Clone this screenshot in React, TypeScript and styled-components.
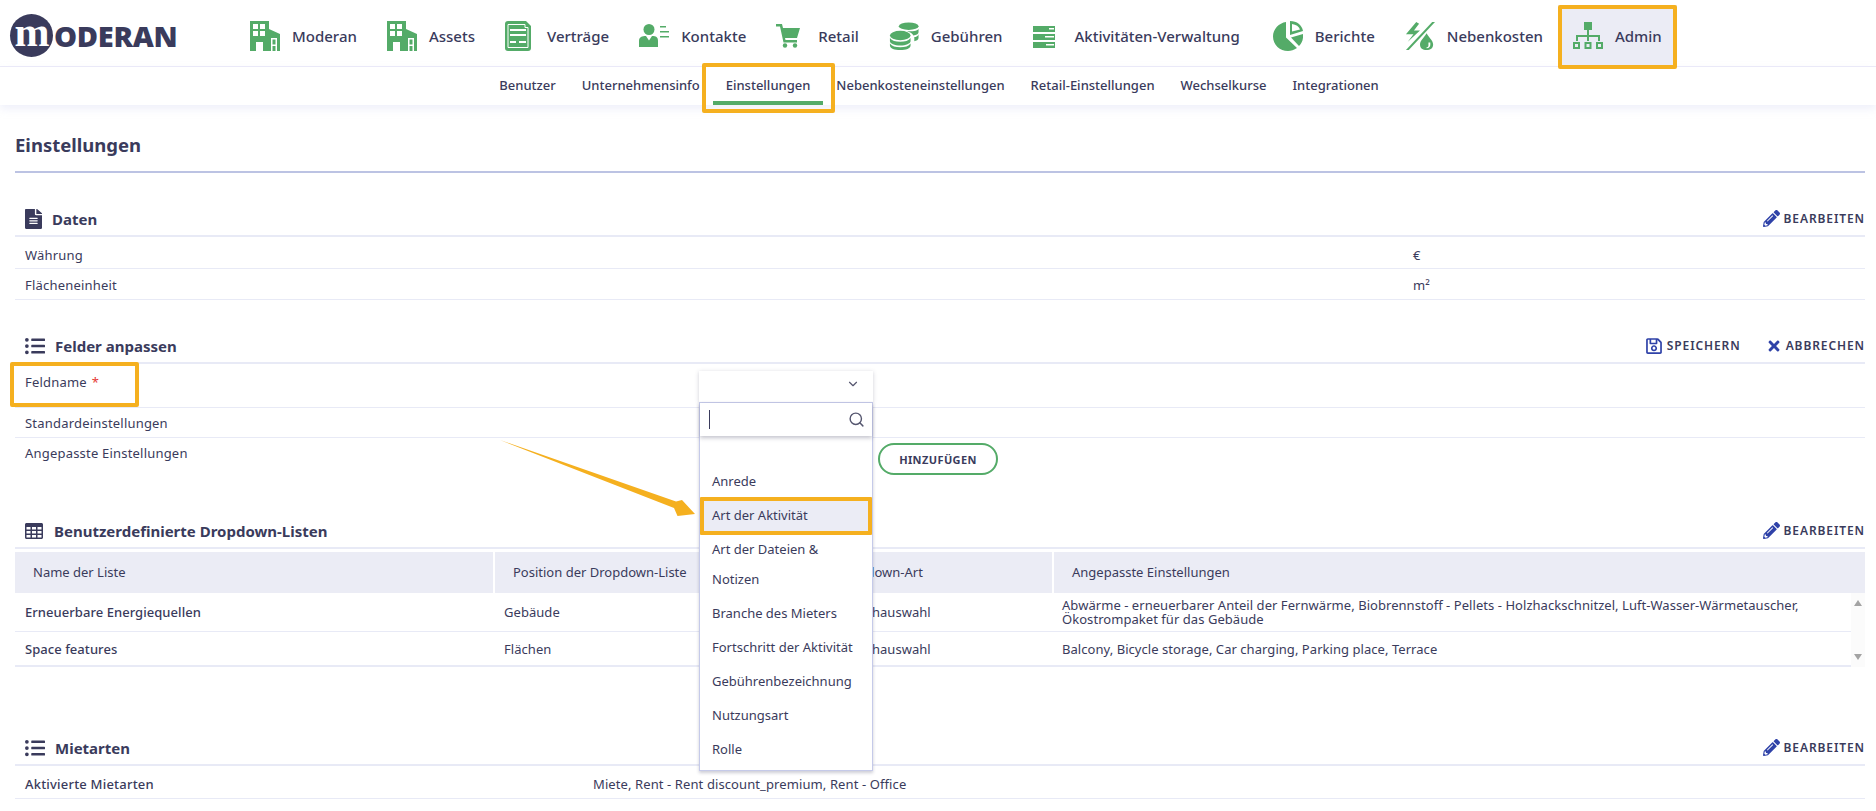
import { FC, ReactNode } from 'react';
import { ChevronDown, Search } from 'lucide-react';
import { FaFileAlt, FaListUl, FaPencilAlt, FaRegSave, FaTimes } from 'react-icons/fa';
import styled, { createGlobalStyle } from 'styled-components';

const INK = '#3a3b5c';
const GREEN = '#54ab68';
const ORANGE = '#f5b01f';
const RULE = '#e8eaf6';
const SOFT = '#ebecf5';

const GlobalStyle = createGlobalStyle`
  html, body {
    margin: 0;
    height: 100%;
    overflow: hidden;
    background: #fff;
  }
  body {
    font-family: 'Noto Sans', 'Open Sans', sans-serif;
    font-size: 13px;
    color: ${INK};
  }
  * {
    box-sizing: border-box;
  }
`;

const Page = styled.div`
  position: relative;
  width: 1876px;
  height: 811px;
  overflow: hidden;
`;

/* top bar */
const NavBar = styled.header`
  display: flex;
  height: 67px;
  padding-top: 5px;
  border-bottom: 1px solid #ecebf8;
`;

const Logo = styled.div`
  display: flex;
  align-items: center;
  width: 235px;
  padding-left: 10px;
`;

const LogoMark = styled.span`
  display: flex;
  align-items: center;
  justify-content: center;
  width: 43px;
  height: 43px;
  border-radius: 50%;
  background: ${INK};
  color: #fff;
  font-family: 'Liberation Serif', serif;
  font-size: 42px;
  font-weight: 700;
  line-height: 34px;
  padding-bottom: 7px;
  letter-spacing: -1px;
`;

const LogoText = styled.span`
  margin-left: 1px;
  font-family: 'Open Sans', sans-serif;
  font-size: 29px;
  font-weight: 800;
  letter-spacing: -0.3px;
  color: ${INK};
`;

const NavItems = styled.nav`
  display: flex;
`;

const NavItem = styled.a<{ $active?: boolean; $nudge?: boolean }>`
  position: relative;
  display: flex;
  align-items: center;
  gap: 12px;
  padding: 0 15px;
  margin-left: ${({ $nudge }) => ($nudge ? '3px' : '0')};
  font-size: 15px;
  font-weight: 500;
  white-space: nowrap;
  background: ${({ $active }) => ($active ? SOFT : 'transparent')};
`;

const NavIcon = styled.svg`
  display: block;
  width: 30px;
  height: 30px;
  fill: ${GREEN};
  flex: none;
`;

const AdminFrame = styled.span`
  position: absolute;
  top: 0;
  left: 0;
  right: 0;
  height: 64px;
  border: 4px solid ${ORANGE};
  border-radius: 2px;
`;

const SubNav = styled.div`
  display: flex;
  justify-content: center;
  height: 38px;
  padding-left: 2px;
  box-shadow: 0 4px 8px rgba(210, 212, 240, 0.35);
`;

const SubNavItem = styled.a<{ $active?: boolean }>`
  position: relative;
  display: flex;
  align-items: center;
  padding: 0 13px 2px;
  font-size: 13px;
  font-weight: 500;
  white-space: nowrap;
  box-shadow: ${({ $active }) => ($active ? `inset 0 -4px 0 ${GREEN}` : 'none')};
`;

const TabFrame = styled.span`
  position: absolute;
  top: -4px;
  left: -11px;
  right: -12px;
  height: 50px;
  border: 4px solid ${ORANGE};
  border-radius: 2px;
`;

/* content */
const Content = styled.main`
  padding: 0 11px 0 15px;
`;

const PageTitle = styled.h1`
  height: 68px;
  margin: 0;
  padding-top: 26px;
  border-bottom: 2px solid #bcc3e3;
  font-size: 18.5px;
  font-weight: 700;
  line-height: 28px;
`;

const Section = styled.section<{ $top: number }>`
  margin-top: ${({ $top }) => $top}px;
`;

const SectionHead = styled.div`
  display: flex;
  align-items: center;
  height: 31px;
  padding: 0 0 4px 10px;
  border-bottom: 2px solid ${RULE};
`;

const SectionTitle = styled.h2`
  display: flex;
  align-items: center;
  gap: 10px;
  margin: 0;
  font-size: 15px;
  font-weight: 700;
  flex: 1;
`;

const FileIcon = styled(FaFileAlt)`
  width: 17px;
  height: 20px;
`;

const TableIcon = styled.svg`
  width: 18px;
  height: 16px;
  fill: ${INK};
  margin-right: 1px;
`;

const Action = styled.a`
  display: flex;
  align-items: center;
  gap: 4px;
  margin-left: 25px;
  font-size: 12px;
  font-weight: 600;
  letter-spacing: 0.9px;
  text-transform: uppercase;
  white-space: nowrap;
  svg {
    color: #2f42a8;
    font-size: 16px;
  }
`;

const Row = styled.div<{ $label: number; $height?: number; $plain?: boolean }>`
  display: grid;
  grid-template-columns: ${({ $label }) => $label}px 1fr;
  height: ${({ $height }) => $height ?? 30}px;
  border-bottom: ${({ $plain }) => ($plain ? 'none' : `1px solid ${RULE}`)};
`;

const Cell = styled.div<{ $top?: number; $strong?: boolean }>`
  position: relative;
  padding: ${({ $top }) => $top ?? 6}px 10px 0;
  line-height: 18px;
  letter-spacing: 0.2px;
  font-weight: ${({ $strong }) => ($strong ? 500 : 400)};
`;

const ListCell = styled(Cell)`
  letter-spacing: 0.1px;
`;

const Required = styled.span`
  color: #e53935;
  margin-left: 5px;
`;

const FieldFrame = styled.span`
  position: absolute;
  top: -2px;
  left: -5px;
  width: 129px;
  height: 45px;
  border: 4px solid ${ORANGE};
  border-radius: 2px;
`;

const AddButton = styled.button`
  display: block;
  width: 120px;
  height: 32px;
  margin-top: 5px;
  border: 2px solid ${GREEN};
  border-radius: 16px;
  background: #fff;
  color: ${INK};
  font-family: inherit;
  font-size: 11px;
  font-weight: 700;
  letter-spacing: 0.4px;
`;

/* dropdown */
const Select = styled.div`
  position: relative;
  width: 174px;
  height: 31px;
  margin-top: 7px;
`;

const Trigger = styled.div`
  display: flex;
  align-items: center;
  justify-content: flex-end;
  height: 100%;
  padding: 0 13px 5px 0;
  background: #fff;
  box-shadow: 0 1px 4px rgba(60, 60, 90, 0.25);
  svg {
    color: #55566f;
  }
`;

const Menu = styled.div`
  position: absolute;
  z-index: 3;
  top: 31px;
  left: 0;
  width: 174px;
  height: 369px;
  background: #fff;
  border: 1px solid #c5cae9;
  box-shadow: 0 2px 3px rgba(60, 60, 90, 0.25);
`;

const MenuSearch = styled.div`
  display: flex;
  align-items: center;
  justify-content: space-between;
  height: 33px;
  margin-bottom: 28px;
  padding: 0 7px 0 9px;
  box-shadow: 0 2px 4px rgba(60, 60, 90, 0.3);
  svg {
    color: #55566f;
  }
`;

const Caret = styled.span`
  width: 1px;
  height: 19px;
  background: ${INK};
`;

const Option = styled.div<{ $active?: boolean }>`
  position: relative;
  padding: 2px 12px;
  line-height: 30px;
  background: ${({ $active }) => ($active ? SOFT : 'transparent')};
`;

const OptionFrame = styled.span`
  position: absolute;
  top: -1px;
  left: 0;
  right: 0;
  height: 38px;
  border: 4px solid ${ORANGE};
  border-radius: 1px;
`;

/* table */
const TableHead = styled.div`
  display: grid;
  grid-template-columns: 478px 321px 234px 1fr;
  gap: 2px;
  margin-top: 3px;
`;

const HeadCell = styled.div`
  height: 41px;
  padding: 0 18px;
  background: ${SOFT};
  line-height: 41px;
  white-space: nowrap;
`;

const TableBody = styled.div`
  display: flex;
`;

const Rows = styled.div`
  flex: 1;
  border-bottom: 2px solid ${RULE};
`;

const BodyRow = styled.div<{ $height: number; $last?: boolean }>`
  display: grid;
  grid-template-columns: 479px 317px 241px 1fr;
  align-items: center;
  height: ${({ $height }) => $height}px;
  border-bottom: ${({ $last }) => ($last ? 'none' : `1px solid ${RULE}`)};
`;

const BodyCell = styled.div<{ $strong?: boolean }>`
  padding: 0 9px 0 10px;
  line-height: 14px;
  letter-spacing: 0.05px;
  font-weight: ${({ $strong }) => ($strong ? 500 : 400)};
`;

const ScrollTrack = styled.div`
  display: flex;
  flex-direction: column;
  align-items: center;
  justify-content: space-between;
  width: 14px;
  padding: 7px 0;
  background: #fbfbfb;
`;

const ScrollArrow = styled.span<{ $down?: boolean }>`
  width: 0;
  height: 0;
  border-left: 4px solid transparent;
  border-right: 4px solid transparent;
  border-bottom: ${({ $down }) => ($down ? 'none' : '6px solid #a3a3a3')};
  border-top: ${({ $down }) => ($down ? '6px solid #a3a3a3' : 'none')};
`;

const PointerArrow = styled.svg`
  position: absolute;
  top: 430px;
  left: 490px;
  width: 220px;
  height: 100px;
`;

const BuildingIcon = () => (
  <NavIcon viewBox="0 0 30 30">
    <path d="M0 0H19V8L30 13V30H0Z" />
    <path
      fill="#fff"
      d="M3 3H8V8H3ZM10 3H15V8H10ZM3 10H8V15H3ZM10 10H15V15H10ZM6 21H13V30H6ZM21 17H27V30H25.5V25H22.5V30H21ZM22.5 18.5V23.5H25.5V18.5Z"
    />
  </NavIcon>
);

const navIcons: Record<string, ReactNode> = {
  Moderan: <BuildingIcon />,
  Assets: <BuildingIcon />,
  Verträge: (
    <NavIcon viewBox="0 0 30 30">
      <path d="M3 0H21L26 5V27C26 29 25 30 23 30H3C1 30 0 29 0 27V3C0 1 1 0 3 0Z" />
      <path
        fill="#fff"
        d="M5 8H21V10H5ZM5 13H21V15H5ZM5 20H11V22H5ZM14 20H21V22H14Z"
      />
      <path fill="none" stroke="#fff" strokeWidth="1" d="M3 3.500H20V6.500H23V26.500H3Z" />
    </NavIcon>
  ),
  Kontakte: (
    <NavIcon viewBox="0 0 30 30">
      <circle cx="10" cy="8.500" r="5.500" />
      <path d="M0 26V20C0 16 3 15 7 15L10 19.500L13 15C17 15 19 16 19 20V26Z" />
      <path d="M21 5H27V6.500H21ZM21 10H30V11.500H21ZM21 15H30V16.500H21Z" />
    </NavIcon>
  ),
  Retail: (
    <NavIcon viewBox="0 0 30 30">
      <path d="M0 3H6L7 7H24L21 17H9L9.500 19H21V21.500H7.500L4 5.500H0Z" />
      <circle cx="9" cy="24.500" r="2.200" />
      <circle cx="19" cy="24.500" r="2.200" />
    </NavIcon>
  ),
  Gebühren: (
    <NavIcon viewBox="0 0 32 30">
      <ellipse cx="21" cy="4.500" rx="10.500" ry="4" />
      <path d="M19 10C25 10 30 10 31.500 7.500V11C31.500 13 29 14 26 14.500C25 12 22 11 19 10ZM27 16C29 16 31 15 31.500 13V17C31.500 19 29 20 27 20.500Z" />
      <ellipse cx="12" cy="14.500" rx="11" ry="5" />
      <path d="M1 17C3 20 7 21 12 21S21 20 23 17V20.500C23 23 18 25 12 25S1 23 1 20.500ZM1 23C3 26 7 27 12 27S21 26 23 23V25C23 28 18 30 12 30S1 28 1 25Z" />
    </NavIcon>
  ),
  'Aktivitäten-Verwaltung': (
    <NavIcon viewBox="0 0 30 30">
      <path
        fillRule="evenodd"
        d="M1 5H23V11H1ZM17 7V8.500H22V7ZM1 13H23V19H1ZM13 15V16.500H22V15ZM1 21H23V27H1ZM14 23V24.500H22V23Z"
      />
    </NavIcon>
  ),
  Berichte: (
    <NavIcon viewBox="0 0 30 30">
      <path d="M13 1V16.500L24 27C21 29 18 30 15 30C7 30 0 24 0 15.500C0 8 6 2 13 1Z" />
      <path d="M17 0C24 0 29 4 30 10L17 14ZM19 3V10.500L27 8.500C26 5.500 23 3.500 19 3Z" fillRule="evenodd" />
      <path d="M18 16.500L30 13C30.500 18 29 22 26 25Z" />
    </NavIcon>
  ),
  Nebenkosten: (
    <NavIcon viewBox="0 0 32 30">
      <path d="M12 0L1 13H9L3 21L16 9H9.500L15 2Z" />
      <path d="M29 0H32L4 30H1Z" />
      <path fillRule="evenodd" d="M23 12C26 17 30 20 30 24C30 28 27 30 23 30C19 30 16 28 16 24C16 20 20 17 23 12ZM25 22V25C25 26 24.500 27 23 27V28C26 28 27 26 27 24V22Z" />
    </NavIcon>
  ),
  Admin: (
    <NavIcon viewBox="0 0 30 30">
      <rect x="11" y="1" width="8" height="8" />
      <path d="M14 9H16V14H27V20H25V16H16V20H14V16H5V20H3V14H14Z" />
      <path
        fillRule="evenodd"
        d="M0 21H7V28H0ZM2 23V26H5V23ZM11.500 21H18.500V28H11.500ZM13.500 23V26H16.500V23ZM23 21H30V28H23ZM25 23V26H28V23Z"
      />
    </NavIcon>
  ),
};

const subNavLabels = [
  'Benutzer',
  'Unternehmensinfo',
  'Einstellungen',
  'Nebenkosteneinstellungen',
  'Retail-Einstellungen',
  'Wechselkurse',
  'Integrationen',
];

const dropdownOptions = [
  'Anrede',
  'Art der Aktivität',
  'Art der Dateien & Notizen',
  'Branche des Mieters',
  'Fortschritt der Aktivität',
  'Gebührenbezeichnung',
  'Nutzungsart',
  'Rolle',
];

const EditAction: FC = () => (
  <Action>
    <FaPencilAlt size={17} />
    Bearbeiten
  </Action>
);

const App: FC = () => (
  <Page>
    <GlobalStyle />
    <NavBar>
      <Logo>
        <LogoMark>m</LogoMark>
        <LogoText>ODERAN</LogoText>
      </Logo>
      <NavItems>
        {Object.keys(navIcons).map((label) => (
          <NavItem key={label} $active={label === 'Admin'} $nudge={label === 'Berichte'}>
            {navIcons[label]}
            {label}
            {label === 'Admin' && <AdminFrame />}
          </NavItem>
        ))}
      </NavItems>
    </NavBar>
    <SubNav>
      {subNavLabels.map((label) => (
        <SubNavItem key={label} $active={label === 'Einstellungen'}>
          {label}
          {label === 'Einstellungen' && <TabFrame />}
        </SubNavItem>
      ))}
    </SubNav>

    <Content>
      <PageTitle>Einstellungen</PageTitle>

      <Section $top={33}>
        <SectionHead>
          <SectionTitle>
            <FileIcon preserveAspectRatio="none" />
            Daten
          </SectionTitle>
          <EditAction />
        </SectionHead>
        <Row $label={1388} $height={32}>
          <Cell $top={9}>Währung</Cell>
          <Cell $top={9}>€</Cell>
        </Row>
        <Row $label={1388} $height={31}>
          <Cell $top={7}>Flächeneinheit</Cell>
          <Cell $top={7}>m²</Cell>
        </Row>
      </Section>

      <Section $top={33}>
        <SectionHead>
          <SectionTitle>
            <FaListUl size={20} />
            Felder anpassen
          </SectionTitle>
          <Action>
            <FaRegSave size={18} />
            Speichern
          </Action>
          <Action>
            <FaTimes />
            Abbrechen
          </Action>
        </SectionHead>
        <Row $label={684} $height={44}>
          <Cell $top={9}>
            Feldname<Required>*</Required>
            <FieldFrame />
          </Cell>
          <Select>
            <Trigger>
              <ChevronDown size={14} />
            </Trigger>
            <Menu>
              <MenuSearch>
                <Caret />
                <Search size={17} />
              </MenuSearch>
              {dropdownOptions.map((option) => (
                <Option key={option} $active={option === 'Art der Aktivität'}>
                  {option}
                  {option === 'Art der Aktivität' && <OptionFrame />}
                </Option>
              ))}
            </Menu>
          </Select>
        </Row>
        <Row $label={863}>
          <Cell>Standardeinstellungen</Cell>
        </Row>
        <Row $label={863} $height={80} $plain>
          <Cell>Angepasste Einstellungen</Cell>
          <AddButton>HINZUFÜGEN</AddButton>
        </Row>
      </Section>

      <Section $top={0}>
        <SectionHead>
          <SectionTitle>
            <TableIcon viewBox="0 0 18 16">
              <path
                fillRule="evenodd"
                d="M1.500 0H16.500C17.300 0 18 .7 18 1.500V14.500C18 15.300 17.300 16 16.500 16H1.500C.7 16 0 15.300 0 14.500V1.500C0 .7 .7 0 1.500 0ZM1.500 4V6.500H5.500V4ZM7 4V6.500H11V4ZM12.500 4V6.500H16.500V4ZM1.500 8V10.500H5.500V8ZM7 8V10.500H11V8ZM12.500 8V10.500H16.500V8ZM1.500 12V14.500H5.500V12ZM7 12V14.500H11V12ZM12.500 12V14.500H16.500V12Z"
              />
            </TableIcon>
            Benutzerdefinierte Dropdown-Listen
          </SectionTitle>
          <EditAction />
        </SectionHead>
        <TableHead>
          <HeadCell>Name der Liste</HeadCell>
          <HeadCell>Position der Dropdown-Liste</HeadCell>
          <HeadCell>Dropdown-Art</HeadCell>
          <HeadCell>Angepasste Einstellungen</HeadCell>
        </TableHead>
        <TableBody>
          <Rows>
            <BodyRow $height={39}>
              <BodyCell $strong>Erneuerbare Energiequellen</BodyCell>
              <BodyCell>Gebäude</BodyCell>
              <BodyCell>Mehrfachauswahl</BodyCell>
              <BodyCell>
                Abwärme - erneuerbarer Anteil der Fernwärme, Biobrennstoff - Pellets - Holzhackschnitzel,
                Luft-Wasser-Wärmetauscher, Ökostrompaket für das Gebäude
              </BodyCell>
            </BodyRow>
            <BodyRow $height={33} $last>
              <BodyCell $strong>Space features</BodyCell>
              <BodyCell>Flächen</BodyCell>
              <BodyCell>Mehrfachauswahl</BodyCell>
              <BodyCell>Balcony, Bicycle storage, Car charging, Parking place, Terrace</BodyCell>
            </BodyRow>
          </Rows>
          <ScrollTrack>
            <ScrollArrow />
            <ScrollArrow $down />
          </ScrollTrack>
        </TableBody>
      </Section>

      <Section $top={68}>
        <SectionHead>
          <SectionTitle>
            <FaListUl size={20} />
            Mietarten
          </SectionTitle>
          <EditAction />
        </SectionHead>
        <Row $label={568} $height={33}>
          <Cell $top={9} $strong>
            Aktivierte Mietarten
          </Cell>
          <ListCell $top={9}>Miete, Rent - Rent discount_premium, Rent - Office</ListCell>
        </Row>
      </Section>
    </Content>

    <PointerArrow viewBox="0 0 220 100">
      <path fill={ORANGE} d="M10 10L186 71.500L192 70L205 84L187.500 86L184 78Z" />
    </PointerArrow>
  </Page>
);

export default App;
